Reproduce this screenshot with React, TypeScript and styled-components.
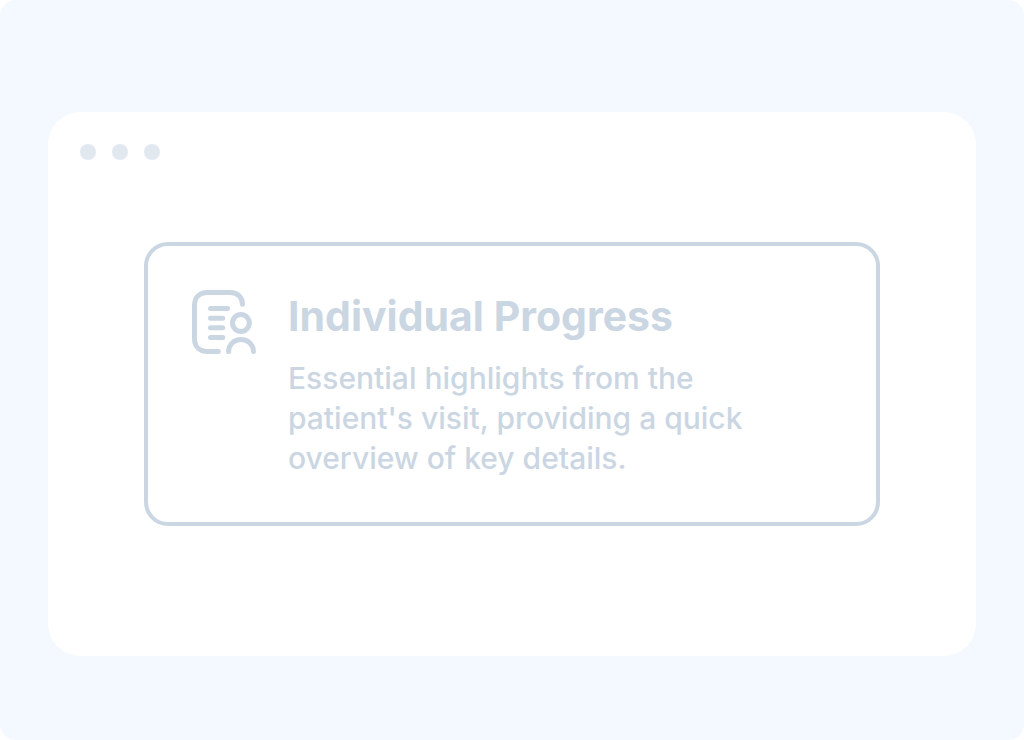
import React from "react";
import styled, { createGlobalStyle } from "styled-components";

const GlobalStyle = createGlobalStyle`
  * { box-sizing: border-box; }
  body {
    margin: 0;
    background: #ffffff;
    font-family: Inter, "Liberation Sans", sans-serif;
  }
`;

const Page = styled.main`
  display: flex;
  flex-direction: column;
  min-height: 100vh;
  padding: 112px 48px 84px;
  border-radius: 16px;
  background: #f3f9ff;
`;

const Window = styled.section`
  flex: 1;
  display: flex;
  flex-direction: column;
  padding: 32px 32px 130px;
  border-radius: 32px;
  background: #ffffff;
`;

const WindowDots = styled.div`
  display: flex;
  gap: 16px;
`;

const Dot = styled.span`
  width: 16px;
  height: 16px;
  border-radius: 50%;
  background: #e1e8f0;
`;

const Card = styled.article`
  display: flex;
  align-items: flex-start;
  gap: 32px;
  margin: 82px 64px 0;
  padding: 44px;
  border: 4px solid #cbd6e3;
  border-radius: 24px;
  color: #cbd6e3;
`;

const CardIcon = styled.svg`
  flex: none;
  width: 64px;
  height: 64px;
`;

const CardBody = styled.div`
  flex: 1;
  min-width: 0;
`;

const Title = styled.h2`
  margin: 0 0 16px;
  font-size: 41px;
  line-height: 52px;
  font-weight: 700;
`;

const Description = styled.p`
  max-width: 488px;
  margin: 0;
  font-size: 30px;
  line-height: 40px;
  font-weight: 500;
`;

function RecordIcon() {
  return (
    <CardIcon viewBox="0 0 64 64" fill="none" stroke="currentColor" strokeWidth="5" strokeLinecap="round" aria-hidden="true">
      <path d="M50.5 14.2C50.5 7.5 45.5 2.5 38.5 2.5H15.5C7.5 2.5 2.5 7.5 2.5 15.5V48.5C2.5 56.5 7.5 61.5 15.5 61.5H26.3" />
      <path d="M18.5 18.6H35.5M18.5 28.3H30.7M18.5 37.8H30.7M18.5 47.4H30.7" />
      <circle cx="48.9" cy="33" r="8.4" />
      <path d="M36.6 61.5C36.6 54.7 42 49.6 49 49.6S61.5 54.7 61.5 61.5" />
    </CardIcon>
  );
}

export default function App() {
  return (
    <>
      <GlobalStyle />
      <Page>
        <Window>
          <WindowDots aria-hidden="true">
            <Dot />
            <Dot />
            <Dot />
          </WindowDots>
          <Card>
            <RecordIcon />
            <CardBody>
              <Title>Individual Progress</Title>
              <Description>
                Essential highlights from the patient's visit, providing a quick overview of key details.
              </Description>
            </CardBody>
          </Card>
        </Window>
      </Page>
    </>
  );
}
